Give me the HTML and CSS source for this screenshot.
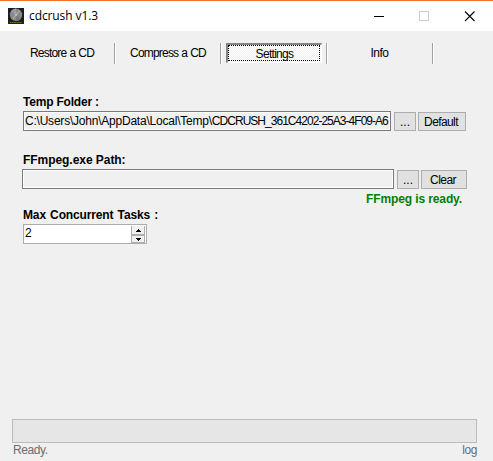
FILE: index.html
```html
<!DOCTYPE html>
<html lang="en">
<head>
<meta charset="utf-8">
<title>cdcrush v1.3</title>
<link rel="stylesheet" href="styles.css">
</head>
<body>
<div class="window">
  <header class="titlebar">
    <svg class="app-icon" width="16" height="16" viewBox="0 0 16 16">
      <rect width="16" height="16" fill="#1b1b21"/>
      <circle cx="8" cy="6.8" r="6.2" fill="#85898e"/>
      <path d="M8 6.8 3 3.2A6.2 6.2 0 0 1 8 .6Z" fill="#9a9ea3"/>
      <path d="M8 6.8 13 10.4A6.2 6.2 0 0 1 8 13Z" fill="#777b80"/>
      <path d="M5 11 11.5 2.5" stroke="#c5a887" stroke-width="1.2"/>
      <circle cx="8" cy="6.8" r="1.2" fill="#b8bcc0"/>
      <rect y="13" width="16" height="3" fill="#25250a"/>
      <path d="M2 14.5H14" stroke="#77751b" stroke-width="1" stroke-dasharray="1.2 .5"/>
    </svg>
    <h1 class="title">cdcrush v1.3</h1>
    <svg class="controls" width="104" height="12" viewBox="0 0 104 12" fill="none" shape-rendering="crispEdges">
      <path d="M0 6.5H10" stroke="#000"/>
      <rect x="45.5" y="1.5" width="9" height="9" stroke="#ccc"/>
      <path d="M91 1.5 100.5 11M100.5 1.5 91 11" stroke="#000" stroke-width="1.1" shape-rendering="auto"/>
    </svg>
  </header>
  <nav class="tabs">
    <div class="tab"><span class="t-restore">Restore a CD</span></div>
    <div class="tab"><span class="t-compress">Compress a CD</span></div>
    <div class="tab"><div class="selected"><span class="t-settings">Settings</span></div></div>
    <div class="tab"><span class="t-info">Info</span></div>
  </nav>
  <main class="settings">
    <div class="label l-temp">Temp Folder :</div>
    <div class="row temp-row">
      <div class="field"><span class="path">C:\Users\John\AppData\Local\Temp\<span class="path-id">CDCRUSH_361C4202-25A3-4F09-A6</span></span></div>
      <div class="button browse">...</div>
      <div class="button default">Default</div>
    </div>
    <div class="label l-ffmpeg">FFmpeg.exe Path:</div>
    <div class="row ffmpeg-row">
      <div class="field"></div>
      <div class="button browse">...</div>
      <div class="button clear">Clear</div>
    </div>
    <div class="label status">FFmpeg is ready.</div>
    <div class="label l-tasks">Max Concurrent Tasks :</div>
    <div class="number">
      <span class="value">2</span>
      <div class="spinner">
        <div class="step up"><svg width="5" height="3" viewBox="0 0 5 3" shape-rendering="crispEdges"><path d="M2 0H3V1H4V2H5V3H0V2H1V1H2Z"/></svg></div>
        <div class="step"><svg width="5" height="3" viewBox="0 0 5 3" shape-rendering="crispEdges"><path d="M0 0H5V1H4V2H3V3H2V2H1V1H0Z"/></svg></div>
      </div>
    </div>
  </main>
  <footer class="footer">
    <div class="progress"></div>
    <div class="footer-text"><span class="ready">Ready.</span><span class="log">log</span></div>
  </footer>
</div>
</body>
</html>
```

FILE: styles.css
```css
* { box-sizing: border-box; }
body { margin: 0; }
.window {
  width: 493px;
  height: 461px;
  display: flex;
  flex-direction: column;
  background: #f0f0f0;
  color: #000;
  font: 12px/14px "Liberation Sans", Arial, sans-serif;
  white-space: nowrap;
  overflow: hidden;
}
.titlebar {
  height: 31px;
  flex: none;
  display: flex;
  align-items: center;
  padding: 0 15px 0 8px;
  border-top: 1px solid #f97026;
  background: #fff;
}
.app-icon { margin-top: -1px; }
.title {
  margin: 0 auto 0 5px;
  font: 12px/16px "Open Sans", sans-serif;
  letter-spacing: -.1px;
}
.controls { margin-top: -1px; }
.tabs {
  height: 21px;
  flex: none;
  display: flex;
  margin: 12px 0 0 9px;
}
.tab {
  width: 106px;
  display: flex;
  align-items: center;
  justify-content: center;
  padding-bottom: 1px;
  border-right: 1px solid #a0a0a0;
  box-shadow: 1px 0 #fff;
}
.t-restore, .t-compress { letter-spacing: -.8px; word-spacing: .5px; }
.t-restore { padding-left: 1px; }
.t-compress { padding-left: 1px; }
.t-settings { letter-spacing: -.7px; padding: 1px 0 0 1px; }
.t-info { letter-spacing: -.5px; }
.selected {
  width: 96px;
  height: 20px;
  display: flex;
  align-items: center;
  justify-content: center;
  border: 1px solid #fff;
  border-top: 2px solid #858585;
  border-left: 2px solid #858585;
  background: repeating-conic-gradient(#fff 0 25%, #f0f0f0 0 50%) 0 0 / 2px 2px;
  outline: 1px dotted #000;
  outline-offset: -3px;
}
.settings { flex: 1; padding: 31px 26px 0 22px; }
.label { height: 14px; padding-left: 1px; font-weight: bold; }
.l-temp { margin-bottom: 2px; letter-spacing: -.2px; }
.l-ffmpeg { margin: 22px 0 2px; letter-spacing: -.05px; }
.row { display: flex; }
.field {
  height: 20px;
  flex: none;
  border: 1px solid #7a7a7a;
  box-shadow: inset 0 0 0 1px #fff;
  padding: 2px 1px 0 1px;
}
.temp-row { padding-left: 1px; }
.temp-row .field { width: 368px; margin-right: 3px; }
.ffmpeg-row .field { width: 372px; margin-right: 3px; }
.path { display: block; letter-spacing: -.22px; }
.path-id { letter-spacing: -.97px; }
.button {
  height: 19px;
  margin-top: 1px;
  display: flex;
  align-items: center;
  justify-content: center;
  border: 1px solid #adadad;
  background: #e1e1e1;
}
.browse { width: 22px; margin-right: 2px; }
.default { width: 48px; letter-spacing: -.6px; padding-right: 2px; }
.clear { width: 46px; padding-right: 2px; letter-spacing: -.55px; }
.status { margin: 3px 5px 0 0; text-align: right; color: #008000; letter-spacing: -.12px; }
.l-tasks { margin: 2px 0; letter-spacing: -.14px; word-spacing: 1px; }
.number {
  width: 124px;
  height: 20px;
  margin-left: 1px;
  display: flex;
  justify-content: space-between;
  border: 1px solid #abadb3;
  background: #fff;
  padding: 0 1px;
}
.value { padding-top: 1px; }
.spinner { width: 14px; display: flex; flex-direction: column; padding-top: 1px; }
.step {
  height: 8px;
  display: flex;
  align-items: center;
  justify-content: center;
  background: #f0f0f0;
  border: 1px solid #adadad;
}
.up { height: 9px; border-top: 0; border-bottom-width: 1px; }
.footer { flex: none; height: 42px; padding: 0 16px 0 12px; color: #6d6d6d; }
.progress { height: 24px; border: 1px solid #bcbcbc; background: #e6e6e6; }
.footer-text { display: flex; justify-content: space-between; padding-left: 1px; letter-spacing: -.4px; }
```
